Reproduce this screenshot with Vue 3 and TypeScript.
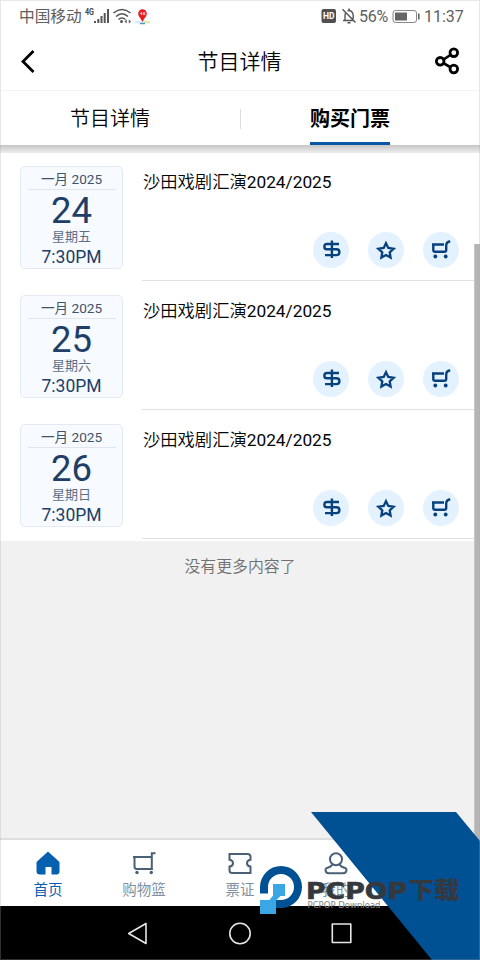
<script setup lang="ts">
interface Performance {
  month: string
  day: number
  weekday: string
  time: string
  title: string
  season: string
}

const performances: Performance[] = [
  { month: '一月 2025', day: 24, weekday: '星期五', time: '7:30PM', title: '沙田戏剧汇演', season: '2024/2025' },
  { month: '一月 2025', day: 25, weekday: '星期六', time: '7:30PM', title: '沙田戏剧汇演', season: '2024/2025' },
  { month: '一月 2025', day: 26, weekday: '星期日', time: '7:30PM', title: '沙田戏剧汇演', season: '2024/2025' },
]
</script>

<template>
  <div class="screen">
    <div class="status">
      <span class="carrier">中国移动</span>
      <svg class="signals" width="70" height="24" viewBox="0 0 70 24">
        <text x="2" y="12" class="net" textLength="9" lengthAdjust="spacingAndGlyphs">4G</text>
        <g fill="#555">
          <rect x="11" y="18" width="2" height="2" /><rect x="14.3" y="16" width="2" height="4" />
          <rect x="17.5" y="13" width="2" height="7" /><rect x="20.7" y="10" width="2" height="10" />
          <rect x="24" y="6" width="2" height="14" />
        </g>
        <g fill="none" stroke="#555" stroke-width="1.6">
          <path d="M30.500 10Q39 3 47.500 10M33 13.500Q39 8 45 13.500M35.500 16.500Q39 13.500 42.500 16.500" />
        </g>
        <circle cx="38.500" cy="18.500" r="1.500" fill="#555" />
        <path d="M41.500 18.500l2.200-2v4zM48 18.500l-2.200-2v4z" fill="#555" />
        <ellipse cx="55" cy="19" rx="3.500" ry="1.500" fill="#d8edf8" />
        <ellipse cx="64" cy="19" rx="3.500" ry="1.500" fill="#dfedb2" />
        <path d="M57 20.500h5" stroke="#4c9bd0" stroke-width="1.500" />
        <path d="M59.500 19.500C58.500 15.500 55.200 14 55.200 10.500a4.300 4.300 0 0 1 8.600 0C63.800 14 60.500 15.500 59.500 19.500z" fill="#e51a23" />
        <path d="M57 11l1.600-1.700v2.800M60.300 9.500v2.200h1.500V9.500z" fill="none" stroke="#fff" stroke-width=".7" />
      </svg>
      <span class="grow"></span>
      <svg class="statusicons" width="36" height="20" viewBox="0 0 36 20">
        <rect x=".500" y="3" width="14.500" height="14" rx="2" fill="#505050" />
        <text x="2" y="13.400" class="hd" textLength="11.500" lengthAdjust="spacingAndGlyphs">HD</text>
        <g fill="none" stroke="#555" stroke-width="1.400">
          <path d="M22 14.500h11M24 14.500V9.500a4.300 4.300 0 0 1 1-3M26.500 4.700c3.500-.7 5.700 1.600 5.700 4.800v3.500M27.300 3.200h1.600M26.500 16.700h3M21.500 3.200l13 13.300" />
        </g>
      </svg>
      <span class="percent">56%</span>
      <svg class="battery" width="28" height="15" viewBox="0 0 28 15">
        <rect x="1" y="1.500" width="23.500" height="12" rx="2.500" fill="#fff" stroke="#888" />
        <rect x="3" y="3.500" width="12" height="8" fill="#666" />
        <rect x="26" y="4.500" width="1.600" height="6" fill="#666" />
      </svg>
      <span class="clock">11:37</span>
    </div>

    <header class="header">
      <svg width="22" height="28" viewBox="0 0 22 28"><path d="M15.500 4L5 14.500L15.500 25" fill="none" stroke="#000" stroke-width="2.800" /></svg>
      <h1>节目详情</h1>
      <svg width="26" height="28" viewBox="0 0 26 28">
        <path d="M18.500 6L5.500 14.500l13 7.500" fill="none" stroke="#000" stroke-width="2.600" />
        <g fill="#fff" stroke="#000" stroke-width="2.800">
          <circle cx="5.200" cy="14.300" r="3.800" /><circle cx="18.800" cy="5.700" r="3.800" /><circle cx="18.800" cy="22" r="3.800" />
        </g>
      </svg>
    </header>

    <nav class="tabs">
      <span class="tab">节目详情</span>
      <i class="separator"></i>
      <span class="tab active">购买门票</span>
    </nav>
    <div class="shade"></div>

    <main class="content">
      <section class="list">
        <article v-for="item in performances" :key="item.day" class="row">
          <div class="date">
            <span class="month">{{ item.month }}</span>
            <strong class="day">{{ item.day }}</strong>
            <span class="weekday">{{ item.weekday }}</span>
            <span class="time">{{ item.time }}</span>
          </div>
          <div class="details">
            <h2>{{ item.title }}<span class="season">{{ item.season }}</span></h2>
            <div class="actions">
              <button class="action" aria-label="票价">
                <svg width="36" height="36" viewBox="0 0 36 36"><path d="M26 12H14a2.600 2.600 0 0 0 0 5.300h9.500a2.900 2.900 0 0 1 0 5.800H12M18.900 8.500v17.500" /></svg>
              </button>
              <button class="action" aria-label="收藏">
                <svg width="36" height="36" viewBox="0 0 36 36"><path class="star" d="M18 11.200l2.300 4.800 5.300.700-3.900 3.600.900 5.200-4.600-2.500-4.600 2.500.900-5.200-3.900-3.600 5.300-.700z" /></svg>
              </button>
              <button class="action" aria-label="购票">
                <svg width="36" height="36" viewBox="0 0 36 36"><path d="M9 12.500H21M10.300 12.500v5.500q0 1.800 1.800 1.800h9.300q1.800 0 1.800-1.800V13.500q0-3.500 4-4.300" /><circle cx="12.300" cy="24.500" r="1.900" /><circle cx="22.700" cy="24.500" r="1.900" /></svg>
              </button>
            </div>
          </div>
        </article>
      </section>
      <p class="end">没有更多内容了</p>
    </main>

    <footer class="footer">
      <div class="item current">
        <svg width="28" height="28" viewBox="0 0 28 28"><path d="M14 2.500L25.500 13v9.500q0 3-3 3h-5V18h-6v7.500H6q-3.500 0-3.500-3V13z" fill="#0560b0" /></svg>
        <span>首页</span>
      </div>
      <div class="item">
        <svg width="28" height="28" viewBox="0 0 28 28"><path d="M25.500 4.300h-3.700V20H7q-2.500 0-2.500-2.500V8h17.300M3 8h2" /><path d="M6 20h16.500" /><circle cx="7" cy="23.500" r="1.700" class="solid" /><circle cx="21.300" cy="23.500" r="1.700" class="solid" /></svg>
        <span>购物篮</span>
      </div>
      <div class="item">
        <svg width="28" height="28" viewBox="0 0 28 28"><path d="M3.500 5h18q3 0 3 2.500v3.300q-3.500.5-3.500 3.400t3.500 3.400v6.400H6.500q-3 0-3-2.500v-3.900q3.500-.5 3.500-3.400t-3.500-3.400z" /></svg>
        <span>票证</span>
      </div>
      <div class="item">
        <svg width="28" height="28" viewBox="0 0 28 28"><circle cx="14" cy="10.300" r="6" /><path d="M10.500 15.700Q8.500 18.300 5.500 18.800Q3.500 19.300 3.500 21.300q.5 3 3.500 3h14q3 0 3.500-3q0-2-2-2.500Q19.500 18.300 17.500 15.700" /></svg>
        <span>我的</span>
      </div>
    </footer>

    <div class="system">
      <svg width="240" height="32" viewBox="0 0 240 32" fill="none" stroke="#e6e6e6" stroke-width="1.600" stroke-linejoin="round">
        <path d="M26 6.500v20L8.700 16.500z" /><circle cx="120" cy="16.500" r="10.200" /><rect x="212.300" y="7" width="18.500" height="18.500" />
      </svg>
    </div>
    <i class="scrollbar"></i>

    <svg class="watermark" width="230" height="148" viewBox="250 812 230 148">
      <path d="M311 812h145l24 29v119h-48z" fill="#005094" />
      <path d="M260 893.500V887a21 21 0 1 1 21 21h-5v-8h5a13 13 0 1 0-13-13v6.500z" fill="#005094" />
      <path d="M273 884h12v12h-4.500l-4.500 4.500V914h-16v-14h9.500l3.500-4.500z" fill="#3ba6e5" />
      <text x="306" y="898.500" class="brand" textLength="101" lengthAdjust="spacingAndGlyphs">PCPOP</text>
      <text x="408.500" y="898" class="brandcn" textLength="51" lengthAdjust="spacingAndGlyphs">下载</text>
      <text x="307.500" y="908.300" class="subtitle" textLength="73" lengthAdjust="spacingAndGlyphs">PCPOP Download</text>
    </svg>
    <i class="frame"></i>
  </div>
</template>

<style>
body { margin: 0; }
</style>

<style scoped>
* { box-sizing: border-box; }
.screen { position: relative; width: 480px; height: 960px; display: flex; flex-direction: column; overflow: hidden; background: #fff; color: #050505; font-family: Roboto, "Noto Sans CJK SC", sans-serif; }
svg { display: block; flex: none; }
.status { height: 33px; padding: 0 16px 0 19px; display: flex; align-items: center; color: #606060; font-size: 16px; }
.carrier { width: 64px; font-size: 15.700px; line-height: 32px; white-space: nowrap; }
.signals { margin-top: -4px; }
.net { font: bold 8.500px Roboto, sans-serif; fill: #444; }
.hd { font: bold 9px Roboto, sans-serif; fill: #fff; }
.grow { flex: 1; }
.statusicons { margin-right: 2px; margin-top: -1px; }
.percent { width: 30px; margin-right: 3px; letter-spacing: -.2px; }
.battery { margin-right: 4px; }
.clock { width: 40px; }
.header { height: 57px; padding: 0 19px 1px 18px; display: flex; align-items: center; justify-content: space-between; }
h1 { margin: 2px 0 0 4px; font-size: 21px; line-height: 28px; font-weight: 350; }
.tabs { height: 55px; display: flex; border-top: 1px solid #f4f4f4; align-items: flex-start; padding: 0 90px 0 70px; }
.tab { width: 80px; height: 54px; font-size: 20px; line-height: 57px; font-weight: 350; }
.active { font-weight: 700; border-bottom: 3px solid #0758a5; color: #000; }
.separator { width: 1px; height: 20px; margin: 18px 69px 0 90px; background: #ddd; }
.shade { height: 8px; background: linear-gradient(#c6c6c6, #eee); }
.content { height: 685px; background: #f1f1f1; }
.list { height: 388px; padding-top: 13px; background: #fff; }
.row { height: 129.200px; display: flex; padding-left: 20px; gap: 19px; }
.date { flex: none; width: 103px; height: 103px; border: 1px solid #e3eaf4; border-radius: 5px; background: #f7faff; display: flex; flex-direction: column; align-items: center; color: #213f66; }
.month { width: 88px; height: 23px; line-height: 24px; text-align: center; border-bottom: 1px solid #e1e6ee; font-size: 13.600px; color: #40536a; white-space: nowrap; }
.day { height: 40px; line-height: 42px; font-size: 36.500px; font-weight: 400; }
.weekday { height: 14px; line-height: 13px; font-size: 13px; color: #5b6f86; }
.time { line-height: 28px; height: 25px; font-size: 17.500px; }
.details { flex: 1; height: 115px; border-bottom: 1px solid #e1e1e1; display: flex; flex-direction: column; justify-content: space-between; }
h2 { margin: 0; padding-left: 1px; font-size: 17.300px; line-height: 32px; font-weight: 350; }
.season { font-weight: 400; }
.actions { display: flex; gap: 18.700px; align-self: flex-end; padding: 0 21.500px 12.500px 0; }
.action { width: 36px; height: 36px; border: 0; border-radius: 50%; background: #e4f2ff; padding: 0; }
.action svg { fill: none; stroke: #07427e; stroke-width: 2.400; }
.action .star { stroke-width: 2.300; }
.action circle { fill: #07427e; stroke: none; }
.end { margin: 14px 0 0; line-height: 24px; font-size: 15.900px; color: #707070; text-align: center; font-weight: 350; }
.footer { height: 68px; flex: none; border-top: 2px solid #dedede; background: #fff; display: flex; padding-right: 96px; }
.item { width: 96px; display: flex; flex-direction: column; align-items: center; padding-top: 9px; color: #8290a0; font-size: 14.500px; line-height: 27px; }
.item svg { fill: none; stroke: #4b6076; stroke-width: 2; }
.item.current svg { stroke: none; }
.current { color: #0560b0; }
.item .solid { fill: #4b6076; stroke: none; }
.system { height: 54px; flex: none; background: #000; display: flex; justify-content: center; align-items: center; }
.scrollbar { position: absolute; right: 0; top: 244px; width: 6px; height: 598px; background: #b5b5b5; border-left: 1px solid #c5c5c5; }
.watermark { position: absolute; right: 0; bottom: 0; }
.brand { font: bold 22.500px "DejaVu Sans", sans-serif; fill: #35393e; stroke: #35393e; stroke-width: .6; }
.brandcn { font: 900 22.500px "Noto Sans CJK SC", sans-serif; fill: #35393e; }
.subtitle { font: 400 8px "DejaVu Sans", sans-serif; fill: #858585; }
.frame { position: absolute; inset: 0; border: 1px solid rgba(170, 170, 170, .28); pointer-events: none; }
</style>
